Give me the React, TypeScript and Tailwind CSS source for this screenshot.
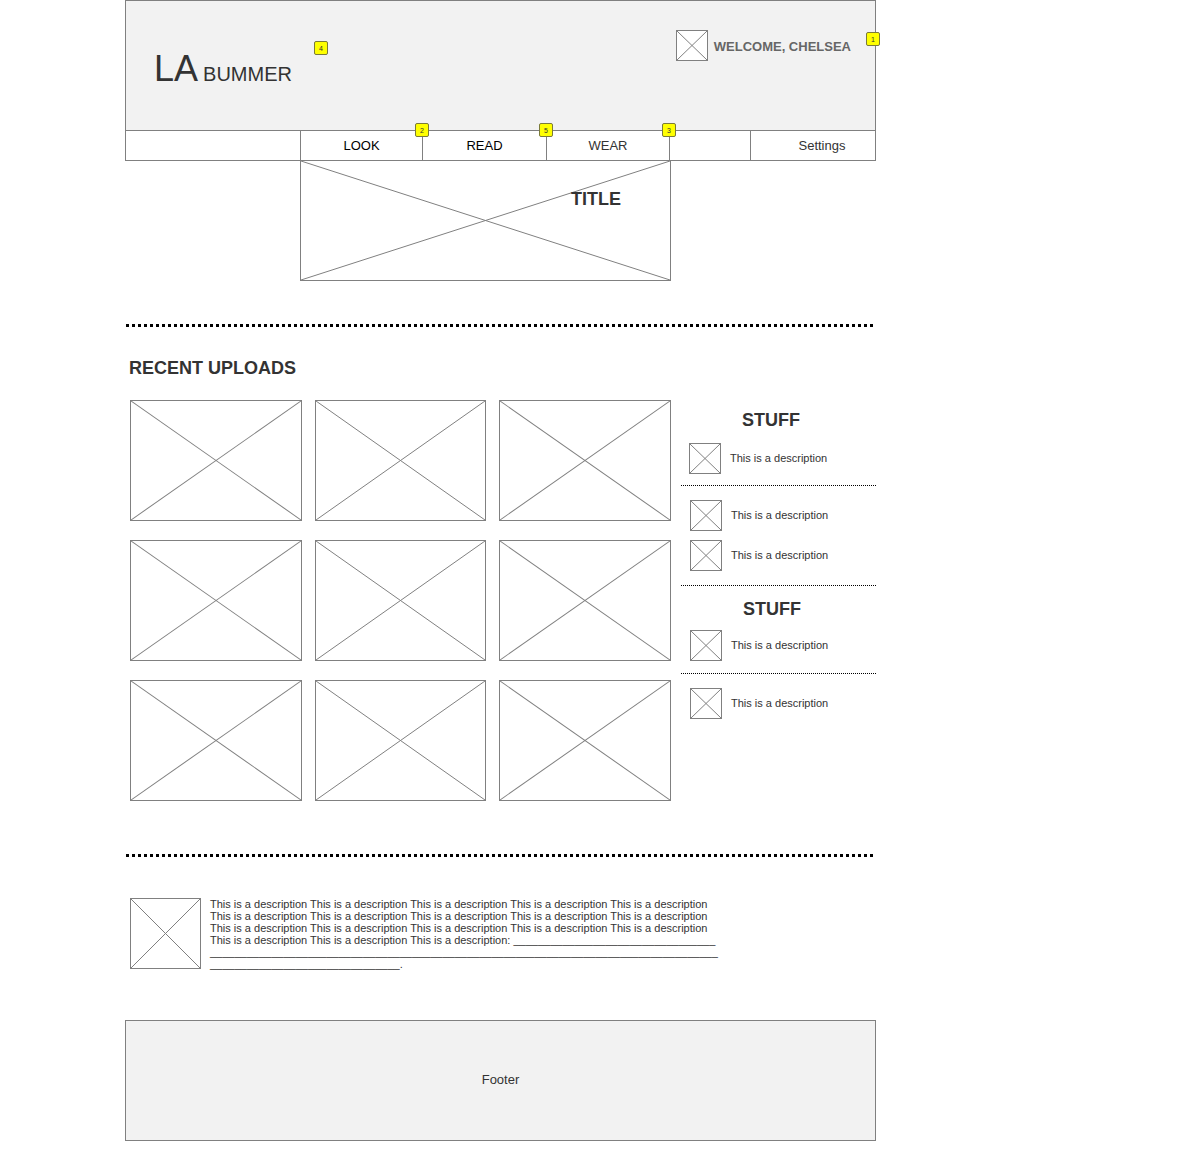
import React from "react";

function Ph({ className = "" }: { className?: string }) {
  return (
    <div className={"border border-[#808080] bg-white " + className}>
      <svg className="block w-full h-full" viewBox="0 0 100 100" preserveAspectRatio="none">
        <line x1="0" y1="0" x2="100" y2="100" stroke="#808080" strokeWidth="1" vectorEffect="non-scaling-stroke" />
        <line x1="100" y1="0" x2="0" y2="100" stroke="#808080" strokeWidth="1" vectorEffect="non-scaling-stroke" />
      </svg>
    </div>
  );
}

function Badge({ n, className }: { n: string; className: string }) {
  return (
    <div
      className={
        "absolute w-[14px] h-[14px] bg-[#ffff00] border border-[#7a7a3a] rounded-[2px] flex items-center justify-center text-[7px] leading-none text-[#333] " +
        className
      }
    >
      {n}
    </div>
  );
}

function Item({ first }: { first?: boolean }) {
  return (
    <div className={"flex items-center gap-[9px] " + (first ? "ml-[9px]" : "ml-[10px]")}>
      <Ph className="w-[32px] h-[31px]" />
      <span className="text-[11px] leading-[13px] text-[#333]">This is a description</span>
    </div>
  );
}

const Dots = () => (
  <div className="h-[3px] w-[750px] ml-[1px] bg-[repeating-linear-gradient(to_right,#000_0px,#000_3px,transparent_3px,transparent_6px)]" />
);

const Sep = () => <div className="border-t border-dotted border-black w-[195px] ml-[1px]" />;

export default function App() {
  const u = (n: number) => "_".repeat(n);
  return (
    <div className="w-[1188px] min-h-[1158px] bg-white font-['Liberation_Sans',Arial,sans-serif]">
      <div className="relative ml-[125px] w-[751px] pb-[17px]">
        {/* header */}
        <div className="h-[131px] w-[751px] border border-[#808080] bg-[#f2f2f2] flex justify-between items-start">
          <div className="pt-[50px] pl-[28px] flex items-baseline gap-[5px] text-[#333]">
            <span className="text-[36px] leading-none">LA</span>
            <span className="text-[20px] leading-none">BUMMER</span>
          </div>
          <div className="mt-[29px] pr-[24px] flex items-center gap-[6px]">
            <Ph className="w-[32px] h-[31px]" />
            <span className="pt-[2px] text-[13px] font-bold text-[#666] leading-none">WELCOME, CHELSEA</span>
          </div>
        </div>
        {/* nav */}
        <div className="h-[30px] flex border-x border-b border-[#808080] text-[13px]">
          <div className="w-[175px] border-r border-[#808080]" />
          <div className="w-[122px] border-r border-[#808080] flex items-center justify-center text-black">LOOK</div>
          <div className="w-[124px] border-r border-[#808080] flex items-center justify-center text-black">READ</div>
          <div className="w-[123px] border-r border-[#808080] flex items-center justify-center text-[#333]">WEAR</div>
          <div className="w-[81px] border-r border-[#808080]" />
          <div className="flex-1 flex items-center justify-center pl-[18px] text-[#333]">Settings</div>
        </div>
        {/* title image */}
        <div className="relative ml-[175px] -mt-[1px] w-[371px] h-[121px]">
          <Ph className="w-full h-full" />
          <span className="absolute left-[271px] top-[29px] text-[18px] leading-[20px] font-bold text-[#333]">TITLE</span>
        </div>
        <div className="mt-[43px]">
          <Dots />
        </div>
        <h2 className="mt-[31px] pl-[4px] text-[18px] leading-[20px] font-bold text-[#333]">RECENT UPLOADS</h2>
        <div className="mt-[22px] flex items-start pl-[5px]">
          <div className="grid grid-cols-[172px_171px_172px] gap-x-[13px] gap-y-[19px]">
            {Array.from({ length: 9 }).map((_, i) => (
              <Ph key={i} className="h-[121px]" />
            ))}
          </div>
          <div className="ml-[9px] w-[196px] flex flex-col">
            <div className="pt-[10px] pl-[62px] text-[18px] leading-[20px] font-bold text-[#333]">STUFF</div>
            <div className="mt-[13px]">
              <Item first />
            </div>
            <div className="mt-[11px]">
              <Sep />
            </div>
            <div className="mt-[14px]">
              <Item />
            </div>
            <div className="mt-[9px]">
              <Item />
            </div>
            <div className="mt-[14px]">
              <Sep />
            </div>
            <div className="mt-[13px] pl-[63px] text-[18px] leading-[20px] font-bold text-[#333]">STUFF</div>
            <div className="mt-[11px]">
              <Item />
            </div>
            <div className="mt-[12px]">
              <Sep />
            </div>
            <div className="mt-[14px]">
              <Item />
            </div>
          </div>
        </div>
        <div className="mt-[53px]">
          <Dots />
        </div>
        <div className="mt-[41px] pl-[5px] flex items-start gap-[9px]">
          <Ph className="w-[71px] h-[71px] shrink-0" />
          <div className="text-[11px] leading-[12px] text-[#333] whitespace-nowrap">
            <div>This is a description This is a description This is a description This is a description This is a description</div>
            <div>This is a description This is a description This is a description This is a description This is a description</div>
            <div>This is a description This is a description This is a description This is a description This is a description</div>
            <div>This is a description This is a description This is a description: {u(33)}</div>
            <div>{u(83)}</div>
            <div>{u(31)}.</div>
          </div>
        </div>
        <div className="mt-[50px] h-[121px] w-[751px] border border-[#808080] bg-[#f2f2f2] flex items-center justify-center pb-[2px] text-[13px] text-[#333]">
          Footer
        </div>

        <Badge n="4" className="left-[189px] top-[41px]" />
        <Badge n="1" className="left-[741px] top-[32px]" />
        <Badge n="2" className="left-[290px] top-[123px]" />
        <Badge n="5" className="left-[414px] top-[123px]" />
        <Badge n="3" className="left-[537px] top-[123px]" />
      </div>
    </div>
  );
}
